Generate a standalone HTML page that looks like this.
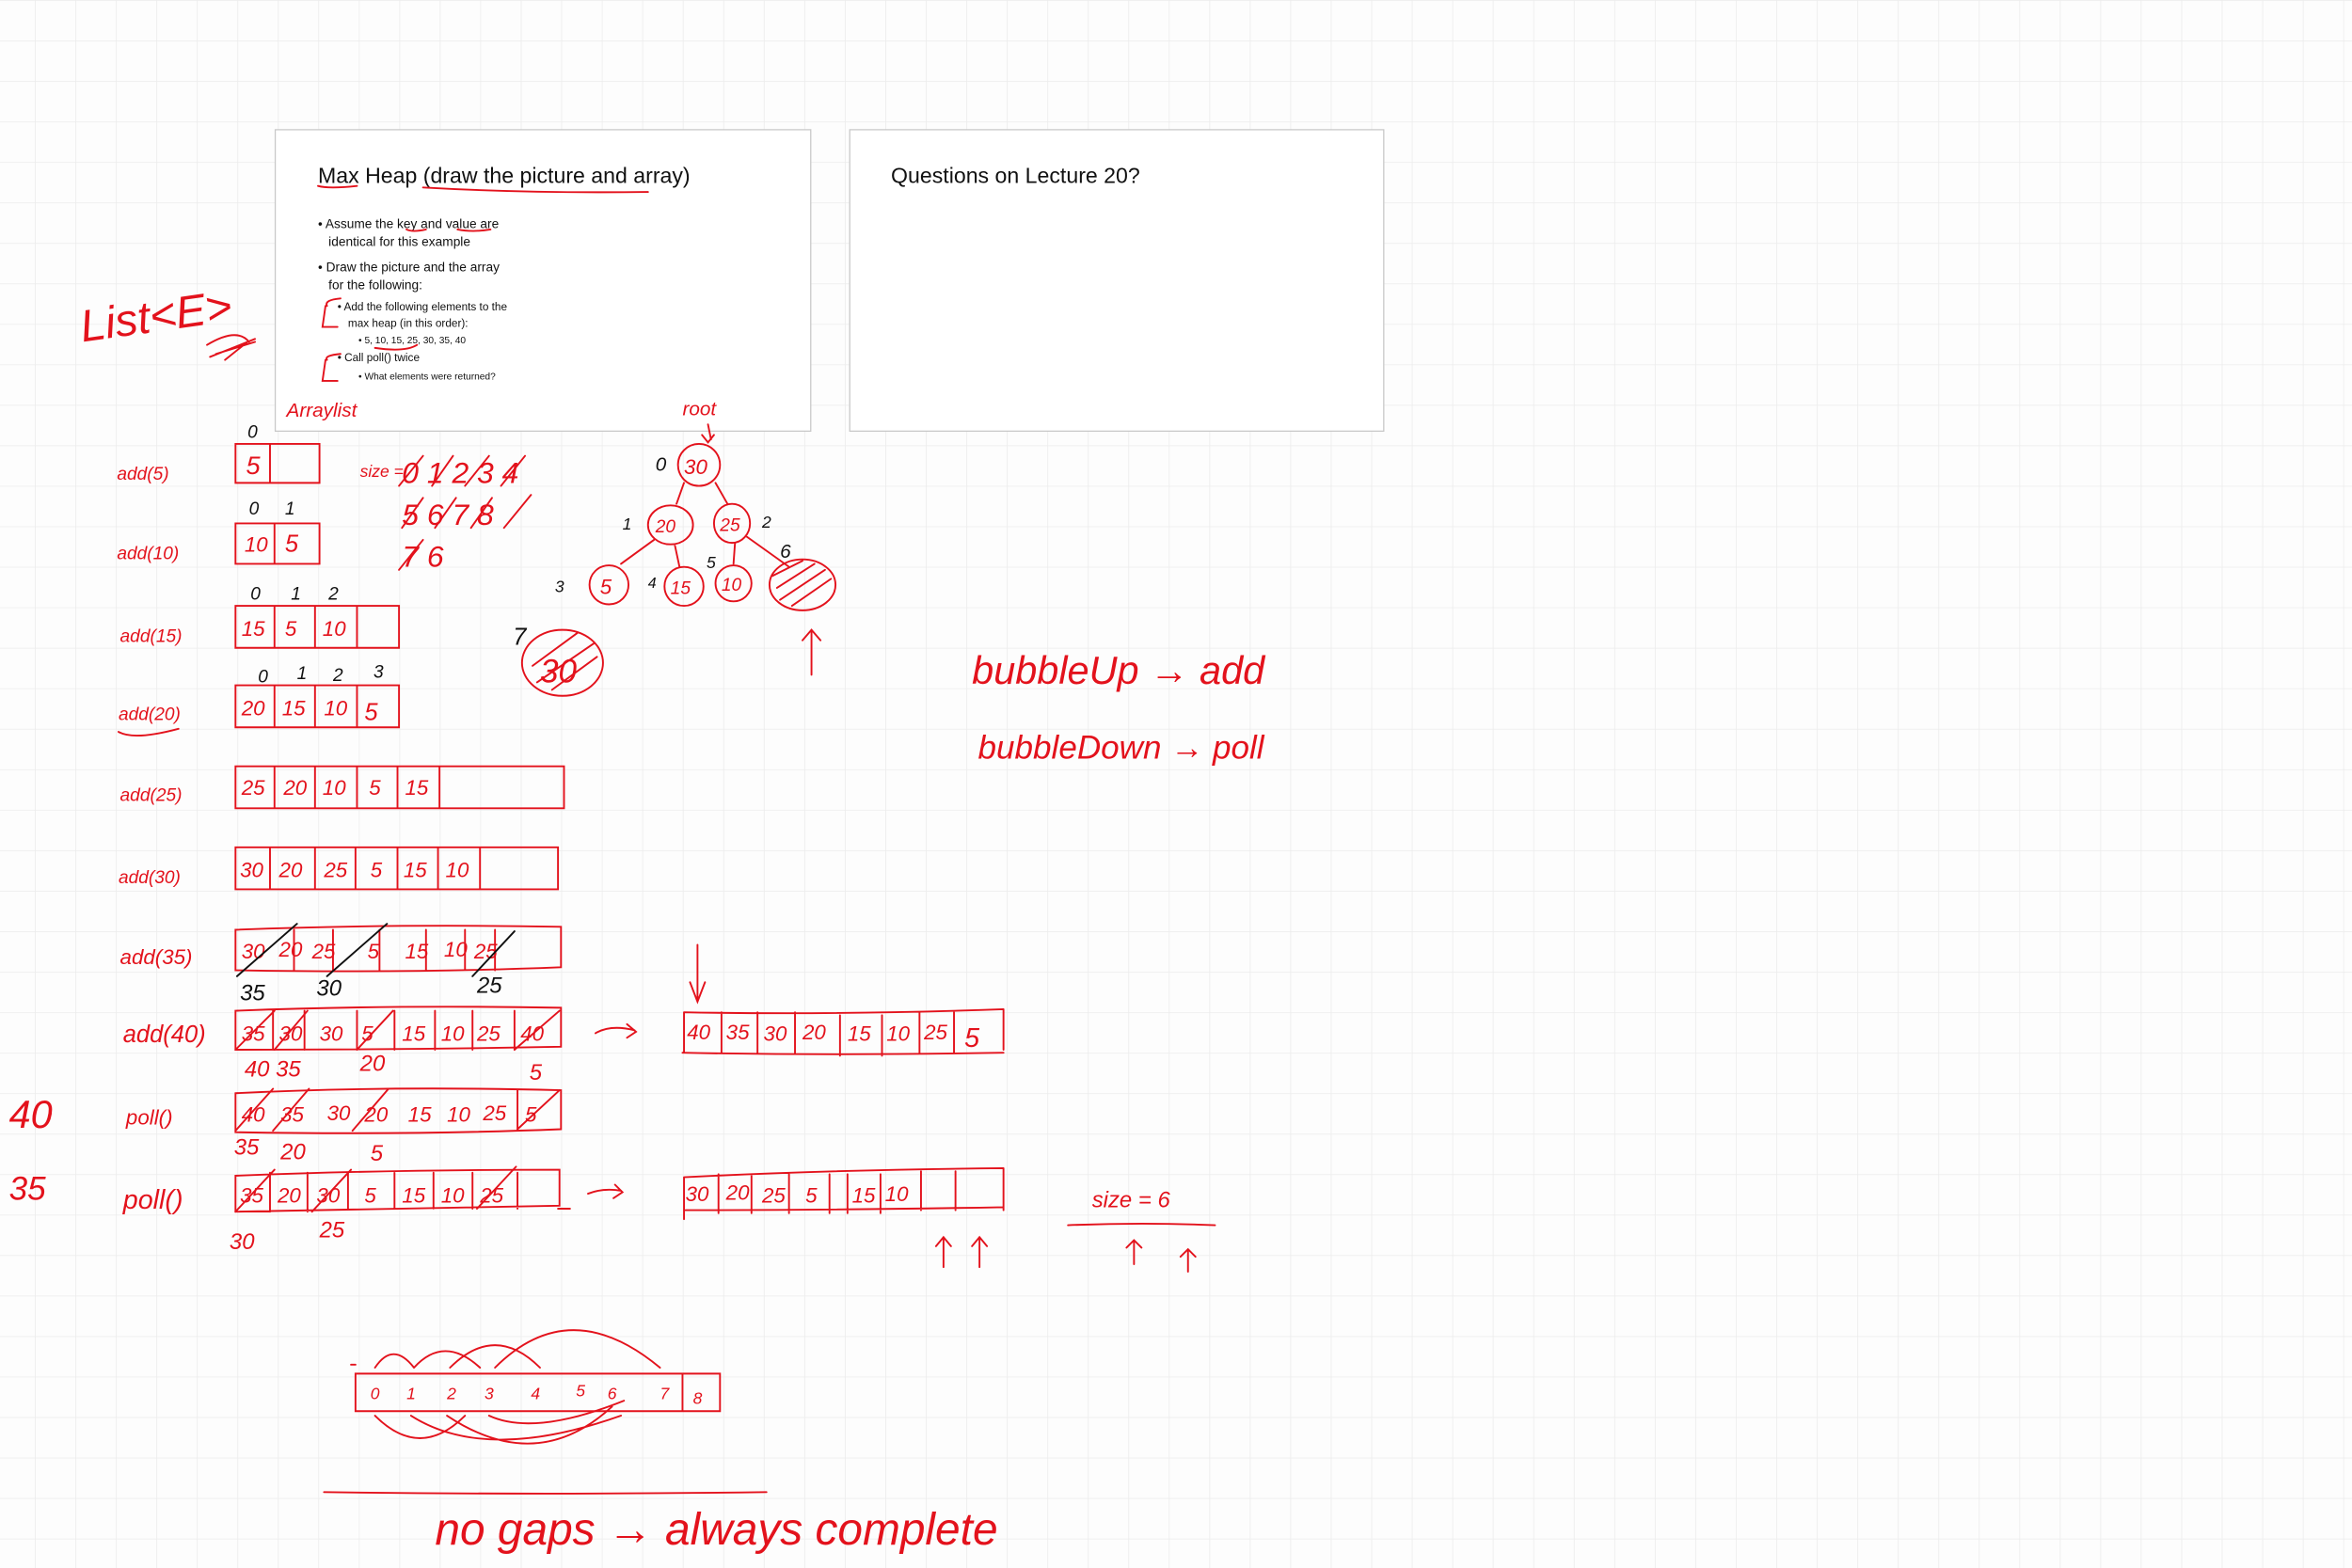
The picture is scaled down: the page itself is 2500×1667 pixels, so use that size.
<!DOCTYPE html>
<html><head><meta charset="utf-8"><style>
html,body{margin:0;padding:0;background:#fdfdfd}
svg{display:block}
.h{fill:#e3121c;font-family:"Liberation Sans",sans-serif;font-style:italic}
.k{fill:#111;font-family:"Liberation Sans",sans-serif;font-style:italic}
.s{fill:#111;font-family:"Liberation Sans",sans-serif}
path,line,rect.b,circle,ellipse{fill:none;stroke:#e3121c;stroke-width:1.2;stroke-linecap:round}
</style></head><body>
<svg width="2500" height="1667" viewBox="0 0 1568 1045.6" preserveAspectRatio="none" xmlns="http://www.w3.org/2000/svg" font-size="14">
<defs><pattern id="g" x="23.2" y="0" width="27" height="27" patternUnits="userSpaceOnUse"><rect width="27" height="27" fill="#fdfdfd"/><path d="M0 0V27M0 0H27" style="stroke:#ececec;stroke-width:1;fill:none"/></pattern></defs>
<rect width="1568" height="1046" fill="url(#g)"/>
<!-- slides -->
<rect x="183.5" y="86.5" width="357" height="201" fill="#fff" stroke="#c8c8c8" stroke-width="0.8"/>
<rect x="566.5" y="86.5" width="356" height="201" fill="#fff" stroke="#c8c8c8" stroke-width="0.8"/>
<text class="s" x="212" y="122" font-size="14.5">Max Heap (draw the picture and array)</text>
<text class="s" x="594" y="122" font-size="14.5">Questions on Lecture 20?</text>
<g class="s" font-size="8.6">
<text x="212" y="152">• Assume the key and value are</text>
<text x="219" y="164">identical for this example</text>
<text x="212" y="181">• Draw the picture and the array</text>
<text x="219" y="193">for the following:</text>
<text x="225" y="207" font-size="7.4">• Add the following elements to the</text>
<text x="232" y="218" font-size="7.4">max heap (in this order):</text>
<text x="239" y="229" font-size="6.4">•  5, 10, 15, 25, 30, 35, 40</text>
<text x="225" y="241" font-size="7.4">• Call poll() twice</text>
<text x="239" y="253" font-size="6.4">•  What elements were returned?</text>
</g>
<path d="M212 124q7 2 26 0M282 125q70 4 150 3M271 153q4 2 13 0M305 153q10 2 22 0M250 232q20 3 28-2M218 204q-2-4 9-5M217 204l-2 14l10 0M218 240q-2-3 9-4M217 240l-2 14l10 0"/>
<!-- List<E> -->
<text class="h" x="55" y="228" font-size="30" transform="rotate(-8 55 228)">List&lt;E&gt;</text>
<path d="M140 238l30-12M144 236l26-8M150 240l15-12M138 230q20-12 28-2"/>
<text class="h" x="191" y="278" font-size="13">Arraylist</text>
<text class="h" x="455" y="277" font-size="13">root</text>
<!-- labels -->
<g class="h" font-size="12">
<text x="78" y="320">add(5)</text><text x="78" y="373">add(10)</text><text x="80" y="428">add(15)</text><text x="79" y="480">add(20)</text><text x="80" y="534">add(25)</text><text x="79" y="589">add(30)</text><text x="80" y="643" font-size="14">add(35)</text><text x="82" y="695" font-size="16">add(40)</text><text x="84" y="750" font-size="14">poll()</text><text x="82" y="806" font-size="18">poll()</text>
</g>
<path d="M79 488q10 6 40-2"/>
<text class="h" x="6" y="752" font-size="26">40</text>
<text class="h" x="6" y="800" font-size="22">35</text>
<!-- index labels -->
<g class="k" font-size="12"><text x="165" y="292">0</text><text x="166" y="343">0</text><text x="190" y="343">1</text><text x="167" y="400">0</text><text x="194" y="400">1</text><text x="219" y="400">2</text><text x="172" y="455">0</text><text x="198" y="453">1</text><text x="222" y="454">2</text><text x="249" y="452">3</text></g>
<!-- arrays -->
<path d="M157 296h56v26h-56zM180 296v26"/>
<text class="h" x="164" y="316" font-size="17">5</text>
<path d="M157 349h56v27h-56zM183 349v27"/>
<text class="h" x="163" y="368">10</text><text class="h" x="190" y="368" font-size="16">5</text>
<path d="M157 404h109v28h-109zM183 404v28M210 404v28M238 404v28"/>
<text class="h" x="161" y="424">15</text><text class="h" x="190" y="424">5</text><text class="h" x="215" y="424">10</text>
<path d="M157 457h109v28h-109zM183 457v28M210 457v28M238 457v28"/>
<text class="h" x="161" y="477">20</text><text class="h" x="188" y="477">15</text><text class="h" x="216" y="477">10</text><text class="h" x="243" y="480" font-size="16">5</text>
<path d="M157 511h219v28h-219zM183 511v28M210 511v28M238 511v28M265 511v28M293 511v28"/>
<text class="h" x="161" y="530">25</text><text class="h" x="189" y="530">20</text><text class="h" x="215" y="530">10</text><text class="h" x="246" y="530">5</text><text class="h" x="270" y="530">15</text>
<path d="M157 565h215v28h-215zM180 565v28M210 565v28M237 565v28M265 565v28M292 565v28M320 565v28"/>
<text class="h" x="160" y="585">30</text><text class="h" x="186" y="585">20</text><text class="h" x="216" y="585">25</text><text class="h" x="247" y="585">5</text><text class="h" x="269" y="585">15</text><text class="h" x="297" y="585">10</text>
<!-- add35 -->
<path d="M157 620q100-4 217-2v27q-100 4-217 2zM196 620v27M222 620v27M253 620v27M284 620v27M310 620v27M330 620v27"/>
<g class="h"><text x="161" y="639">30</text><text x="186" y="638">20</text><text x="208" y="639">25</text><text x="245" y="639">5</text><text x="270" y="639">15</text><text x="296" y="638">10</text><text x="316" y="639">25</text></g>
<path d="M158 651l40-35M218 651l40-35M315 651l28-30" style="stroke:#111"/>
<g class="k" font-size="15"><text x="160" y="667">35</text><text x="211" y="664">30</text><text x="318" y="662">25</text></g>
<path d="M465 630v38M460 655l5 13l5-13"/>
<!-- add40 -->
<path d="M157 674q100-4 217-2v26q-100 2-217 2zM182 674v26M203 674v26M238 674v26M263 674v26M290 674v26M315 674v26M343 674v26"/>
<g class="h"><text x="161" y="694">35</text><text x="186" y="694">30</text><text x="213" y="694">30</text><text x="241" y="694">5</text><text x="268" y="694">15</text><text x="294" y="694">10</text><text x="318" y="694">25</text><text x="347" y="694">40</text></g>
<path d="M157 700l26-26M183 700l22-26M238 700l24-26M343 700l30-26"/>
<g class="h" font-size="15"><text x="163" y="718">40 35</text><text x="240" y="714">20</text><text x="353" y="720">5</text></g>
<path d="M397 689q10-6 26-2M418 683l6 5l-6 4"/>
<path d="M456 675q100 2 213-2M455 702q100 2 214 0M456 675v27M669 673v27M481 675v27M505 675v27M530 675v27M560 677v27M588 677v27M613 675v27M636 675v27"/>
<g class="h"><text x="458" y="693">40</text><text x="484" y="693">35</text><text x="509" y="694">30</text><text x="535" y="693">20</text><text x="565" y="694">15</text><text x="591" y="694">10</text><text x="616" y="693">25</text><text x="643" y="698" font-size="18">5</text></g>
<!-- poll1 -->
<path d="M157 729q100-5 217-2v26q-100 4-217 2zM345 727v26"/>
<g class="h"><text x="161" y="748">40</text><text x="187" y="748">35</text><text x="218" y="747">30</text><text x="243" y="748">20</text><text x="272" y="748">15</text><text x="298" y="748">10</text><text x="322" y="747">25</text><text x="350" y="748">5</text></g>
<path d="M157 754l25-28M182 754l24-28M235 754l24-28M345 753l28-26"/>
<g class="h" font-size="15"><text x="156" y="770">35</text><text x="187" y="773">20</text><text x="247" y="774">5</text></g>
<!-- poll2 -->
<path d="M157 784q100-4 216-4v24q-100 2-216 4zM180 782v26M205 782v26M232 782v24M263 782v24M289 782v24M315 782v24M345 782v24"/>
<g class="h"><text x="160" y="802">35</text><text x="185" y="802">20</text><text x="211" y="802">30</text><text x="243" y="802">5</text><text x="268" y="802">15</text><text x="294" y="802">10</text><text x="320" y="802">25</text></g>
<path d="M157 808l26-28M208 808l26-28M318 806l26-28M372 806h8"/>
<g class="h" font-size="15"><text x="153" y="833">30</text><text x="213" y="825">25</text></g>
<path d="M392 796q10-4 22-2M410 790l5 5l-6 4"/>
<path d="M456 785q100-5 213-6M457 807q100 0 212-2M456 785v28M669 779v28M479 783v26M501 783v26M526 783v26M553 783v26M565 783v26M587 783v26M614 781v26M637 781v26"/>
<g class="h"><text x="457" y="801">30</text><text x="484" y="800">20</text><text x="508" y="802">25</text><text x="537" y="802">5</text><text x="568" y="802">15</text><text x="590" y="801">10</text></g>
<path d="M629 845v-20M624 831l5-6l5 6M653 845v-20M648 831l5-6l5 6M756 843v-16M751 832l5-5l5 5M792 848v-14M787 838l5-5l5 5M712 817q50-2 98 0"/>
<text class="h" x="728" y="805" font-size="15">size = 6</text>
<!-- size notes -->
<text class="h" x="240" y="318" font-size="11">size =</text>
<text class="h" x="268" y="322" font-size="20">0 1 2 3 4</text>
<text class="h" x="268" y="350" font-size="20">5 6 7 8</text>
<text class="h" x="268" y="378" font-size="20">7 6</text>
<path d="M266 324l16-20M288 324l14-20M310 324l16-20M334 324l16-20M268 352l14-20M290 352l14-20M314 352l14-20M336 352l18-22M266 380l16-20"/>
<!-- tree -->
<ellipse cx="466" cy="310" rx="14" ry="14"/><text class="h" x="456" y="316">30</text>
<ellipse cx="447" cy="350" rx="15" ry="13"/><text class="h" x="437" y="355" font-size="12">20</text>
<ellipse cx="488" cy="349" rx="12" ry="13"/><text class="h" x="480" y="354" font-size="12">25</text>
<ellipse cx="406" cy="390" rx="13" ry="13"/><text class="h" x="400" y="396">5</text>
<ellipse cx="456" cy="391" rx="13" ry="13"/><text class="h" x="447" y="396" font-size="12">15</text>
<ellipse cx="489" cy="389" rx="12" ry="12"/><text class="h" x="481" y="394" font-size="12">10</text>
<ellipse cx="535" cy="390" rx="22" ry="17"/>
<path d="M518 392l25-16M520 400l30-20M528 404l26-18M515 384l20-10"/>
<ellipse cx="375" cy="442" rx="27" ry="22"/>
<path d="M355 444l30-22M358 455l38-26M368 460l30-22"/>
<text class="h" x="360" y="455" font-size="22">30</text>
<path d="M456 322l-5 14M477 322l8 14M436 360l-22 16M450 364l3 14M490 362l-1 14M498 358l28 20M472 283l2 10M468 290l4 5l4-5M541 450v-30M535 427l6-7l6 7"/>
<g class="k" font-size="13"><text x="437" y="314">0</text><text x="415" y="353" font-size="11">1</text><text x="508" y="352" font-size="11">2</text><text x="370" y="395" font-size="11">3</text><text x="432" y="392" font-size="10">4</text><text x="471" y="379" font-size="11">5</text><text x="520" y="372">6</text><text x="342" y="430" font-size="16">7</text></g>
<!-- bubble -->
<text class="h" x="648" y="456" font-size="26">bubbleUp → add</text>
<text class="h" x="652" y="506" font-size="22">bubbleDown → poll</text>
<!-- bottom array -->
<path d="M237 916h243v25h-243zM455 916v25M237 910h-3"/>
<g class="h" font-size="11"><text x="247" y="933">0</text><text x="271" y="933">1</text><text x="298" y="933">2</text><text x="323" y="933">3</text><text x="354" y="933">4</text><text x="384" y="931">5</text><text x="405" y="933">6</text><text x="440" y="933">7</text><text x="462" y="936">8</text></g>
<path d="M250 912q12-18 26 0M276 912q20-22 44 0M300 912q30-30 60 0M330 912q50-50 110 0M250 944q30 30 60 0M274 944q50 32 140 0M298 944q60 40 110-6M326 944q30 14 90-10"/>
<path d="M216 995q150 2 295 0"/>
<text class="h" x="290" y="1030" font-size="30">no gaps → always complete</text>
</svg>
</body></html>
